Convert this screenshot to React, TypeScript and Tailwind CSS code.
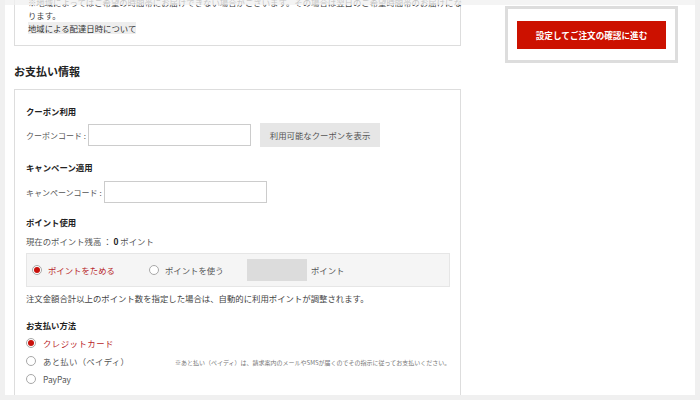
import React from 'react'

const font = { fontFamily: '"Noto Sans CJK JP", "Noto Sans", sans-serif' }

function Radio({ checked }: { checked?: boolean }) {
  return (
    <span className="flex h-[10px] w-[10px] shrink-0 items-center justify-center rounded-full border border-[#a8a8a8] bg-white">
      {checked && <span className="h-[6px] w-[6px] rounded-full bg-[#c8100a]" />}
    </span>
  )
}

export default function App() {
  return (
    <div
      className="relative h-[400px] w-[700px] overflow-hidden bg-[#f0f0f0] px-[5px] pb-[5px] text-[8.4px] text-[#444]"
      style={font}
    >
      {/* sticky header edge */}
      <div className="absolute left-0 right-0 top-0 z-10 h-[5px] bg-[#f0f0f0]/75" />

      <div className="flex h-full overflow-hidden bg-white">
        {/* Left column */}
        <div className="w-[456px] shrink-0 pl-[9px]">
          {/* Delivery note box */}
          <div className="mt-[-4px] border border-t-0 border-[#dddddd] pb-[10px] pl-[13px] leading-[13px] text-[#444]">
            <p className="whitespace-nowrap">
              ※地域によってはご希望の時間帯にお届けできない場合がございます。その場合は翌日のご希望時間帯のお届けにな
            </p>
            <p>ります。</p>
            <p>
              <span className="bg-[#eeeeee] text-[#333]">地域による配達日時について</span>
            </p>
          </div>

          <h2 className="mt-[17px] mb-[10px] text-[11px] font-bold leading-[16px] text-[#222]">お支払い情報</h2>

          <div className="border border-b-0 border-[#dddddd] pl-[11px] pt-[14px] pb-[40px] leading-[13px]">
            {/* Coupon */}
            <h3 className="mt-[1px] font-bold text-[#222]">クーポン利用</h3>
            <div className="mt-[5px] flex h-[24px] items-center">
              <span className="mr-[2px] shrink-0 whitespace-nowrap text-[8px] text-[#555]">クーポンコード :</span>
              <div className="h-[22px] w-[163px] shrink-0 border border-[#cccccc] bg-white" />
              <button className="ml-[9px] h-[24px] w-[120px] shrink-0 whitespace-nowrap bg-[#e6e6e6] text-[8.4px] text-[#555]">
                利用可能なクーポンを表示
              </button>
            </div>

            {/* Campaign */}
            <h3 className="mt-[14px] font-bold text-[#222]">キャンペーン適用</h3>
            <div className="mt-[7px] flex h-[22px] items-center">
              <span className="mr-[2px] shrink-0 whitespace-nowrap text-[8px] text-[#555]">キャンペーンコード :</span>
              <div className="h-[22px] w-[163px] shrink-0 border border-[#cccccc] bg-white" />
            </div>

            {/* Points */}
            <h3 className="mt-[13px] font-bold text-[#222]">ポイント使用</h3>
            <p className="mt-[6px] text-[#555]">
              現在のポイント残高 ： <span className="font-bold text-[#222]">0</span> ポイント
            </p>
            <div className="mt-[5px] mr-[10px] flex h-[34px] items-center border border-[#e6e6e6] bg-[#f5f5f5] pl-[5px]">
              <Radio checked />
              <span className="ml-[6px] w-[101px] whitespace-nowrap text-[#b8262a]">ポイントをためる</span>
              <Radio />
              <span className="ml-[6px] w-[82px] whitespace-nowrap text-[#555]">ポイントを使う</span>
              <div className="h-[22px] w-[60px] shrink-0 bg-[#dcdcdc]" />
              <span className="ml-[4px] whitespace-nowrap text-[#555]">ポイント</span>
            </div>
            <p className="mt-[5px] text-[#444]">
              注文金額合計以上のポイント数を指定した場合は、自動的に利用ポイントが調整されます。
            </p>

            {/* Payment method */}
            <h3 className="mt-[14px] font-bold text-[#222]">お支払い方法</h3>
            <div className="mt-[2px] flex h-[18px] items-center">
              <Radio checked />
              <span className="ml-[7px] tracking-[0.5px] text-[#b8262a]">クレジットカード</span>
            </div>
            <div className="flex h-[18px] items-center">
              <div className="flex w-[149px] shrink-0 items-center">
                <Radio />
                <span className="ml-[7px] whitespace-nowrap tracking-[0.3px] text-[#555]">あと払い（ペイディ）</span>
              </div>
              <span className="mt-[3px] whitespace-nowrap text-[6px] text-[#777]">
                ※あと払い（ペイディ）は、請求案内のメールやSMSが届くのでその指示に従ってお支払いください。
              </span>
            </div>
            <div className="flex h-[18px] items-center">
              <Radio />
              <span className="ml-[7px] text-[#555]">PayPay</span>
            </div>
          </div>
        </div>

        {/* Right column */}
        <div className="ml-[44px] w-[173px] shrink-0">
          <div className="mt-[6px] border-[3px] border-[#dddddd] bg-white px-[9px] pt-[12px] pb-[11px]">
            <button className="h-[28px] w-full bg-[#cc1100] text-[8.6px] font-bold text-white">
              設定してご注文の確認に進む
            </button>
          </div>
        </div>
      </div>
    </div>
  )
}
